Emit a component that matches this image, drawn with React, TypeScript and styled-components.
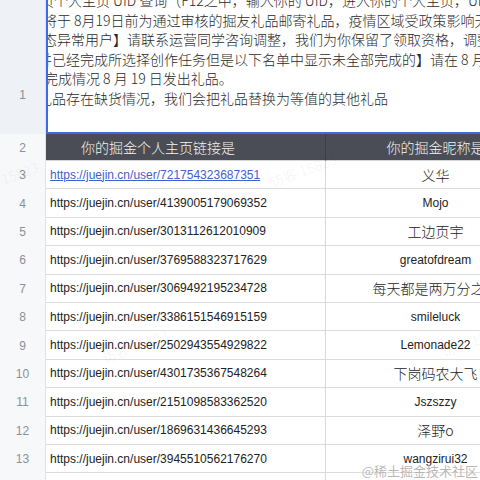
import React from "react";
import styled, { createGlobalStyle } from "styled-components";

const Global = createGlobalStyle`
  html, body { margin: 0; padding: 0; background: #fff; }
  body {
    width: 480px;
    height: 480px;
    overflow: hidden;
    font-family: "Noto Sans CJK SC", "Noto Sans", sans-serif;
  }
`;

const Sheet = styled.div`
  position: relative;
  width: 480px;
  height: 480px;
  overflow: hidden;
  background: #fff;
`;

const Row = styled.div<{ $h: number }>`
  display: flex;
  height: ${(p) => p.$h}px;
  flex: 0 0 auto;
`;

const RowHead = styled.div<{ $active?: boolean; $pad?: number }>`
  flex: 0 0 46px;
  border-right: 1px solid #dfe2e6;
  background: ${(p) => (p.$active ? "#eef1f6" : "#f7f8fa")};
  display: flex;
  justify-content: center;
  align-items: ${(p) => (p.$pad ? "flex-end" : "center")};
  padding-bottom: ${(p) => p.$pad ?? 0}px;
  box-sizing: border-box;
  font-family: "Liberation Sans", sans-serif;
  font-size: 12px;
  color: #8b9099;
`;

const Cells = styled.div`
  flex: 1;
  display: flex;
  overflow: hidden;
  min-width: 0;
`;

const NoteCell = styled.div`
  flex: 1;
  border-left: 2px solid #3d6be2;
  border-bottom: 2px solid #3d6be2;
  overflow: hidden;
  background: #fff;
`;

const Note = styled.div`
  margin-top: -9px;
  font-size: 14px;
  font-weight: 300;
  line-height: 19.6px;
  color: #2a2a2a;
  white-space: nowrap;
`;

const NoteLine = styled.div<{ $shift: number }>`
  margin-left: ${(p) => p.$shift}px;
`;

const HeadCell = styled.div<{ $w: number; $left?: boolean }>`
  flex: 0 0 ${(p) => p.$w}px;
  box-sizing: border-box;
  background: #4a4d55;
  color: #f4f4f4;
  font-size: 14px;
  font-weight: 300;
  display: flex;
  align-items: center;
  justify-content: ${(p) => (p.$left ? "flex-start" : "center")};
  padding-left: ${(p) => (p.$left ? 35 : 0)}px;
  border-right: 1px solid #3c3f45;
  border-bottom: 1px solid #d6d6d6;
  white-space: nowrap;
`;

const Cell = styled.div<{ $w: number; $center?: boolean }>`
  flex: 0 0 ${(p) => p.$w}px;
  box-sizing: border-box;
  border-right: 1px solid #d9d9d9;
  border-bottom: 1px solid #dcdcdc;
  display: flex;
  align-items: center;
  justify-content: ${(p) => (p.$center ? "center" : "flex-start")};
  padding-left: ${(p) => (p.$center ? 0 : 4)}px;
  white-space: nowrap;
  overflow: hidden;
  color: #222;
`;

const Url = styled.span<{ $link?: boolean }>`
  font-family: "Liberation Sans", sans-serif;
  font-size: 12px;
  color: ${(p) => (p.$link ? "#3f5fcc" : "#222")};
  text-decoration: ${(p) => (p.$link ? "underline" : "none")};
`;

const Nick = styled.span<{ $cjk?: boolean }>`
  font-family: ${(p) =>
    p.$cjk ? '"Noto Sans CJK SC", sans-serif' : '"Liberation Sans", sans-serif'};
  font-size: ${(p) => (p.$cjk ? 14 : 12)}px;
  font-weight: ${(p) => (p.$cjk ? 300 : 400)};
  color: #222;
`;

const Watermark = styled.span<{ $x: number; $y: number }>`
  position: absolute;
  left: ${(p) => p.$x}px;
  top: ${(p) => p.$y}px;
  transform: rotate(-20deg);
  font-size: 14px;
  color: rgba(0, 0, 0, 0.05);
  white-space: nowrap;
  pointer-events: none;
`;

const Brand = styled.span`
  position: absolute;
  right: 2px;
  bottom: 0;
  font-size: 13px;
  color: rgba(170, 170, 170, 0.85);
  text-shadow: 0 0 2px #fff;
  white-space: nowrap;
`;

const noteLines: { text: string; shift: number }[] = [
  { text: "页个人主页 UID 查询（F12之中，输入你的 UID，进入你的个人主页，UID 在", shift: -8 },
  { text: "将于 8月19日前为通过审核的掘友礼品邮寄礼品，疫情区域受政策影响无法", shift: -5 },
  { text: "态异常用户】请联系运营同学咨询调整，我们为你保留了领取资格，调整", shift: -5 },
  { text: "并已经完成所选择创作任务但是以下名单中显示未全部完成的】请在 8 月", shift: -10 },
  { text: "完成情况 8 月 19 日发出礼品。", shift: -4 },
  { text: "礼品存在缺货情况，我们会把礼品替换为等值的其他礼品", shift: -10 },
];

const rows: { id: string; nick: string; cjk?: boolean }[] = [
  { id: "721754323687351", nick: "义华", cjk: true },
  { id: "4139005179069352", nick: "Mojo" },
  { id: "3013112612010909", nick: "工边页宇", cjk: true },
  { id: "3769588323717629", nick: "greatofdream" },
  { id: "3069492195234728", nick: "每天都是两万分之一", cjk: true },
  { id: "3386151546915159", nick: "smileluck" },
  { id: "2502943554929822", nick: "Lemonade22" },
  { id: "4301735367548264", nick: "下岗码农大飞", cjk: true },
  { id: "2151098583362520", nick: "Jszszzy" },
  { id: "1869631436645293", nick: "泽野o", cjk: true },
  { id: "3945510562176270", nick: "wangzirui32" },
];

export default function App() {
  return (
    <>
      <Global />
      <Sheet>
        <Row $h={134}>
          <RowHead $active $pad={32}>1</RowHead>
          <Cells>
            <NoteCell>
              <Note>
                {noteLines.map((l, i) => (
                  <NoteLine key={i} $shift={l.shift}>
                    {l.text}
                  </NoteLine>
                ))}
              </Note>
            </NoteCell>
          </Cells>
        </Row>
        <Row $h={27}>
          <RowHead>2</RowHead>
          <Cells>
            <HeadCell $w={280} $left>
              你的掘金个人主页链接是
            </HeadCell>
            <HeadCell $w={220}>你的掘金昵称是</HeadCell>
          </Cells>
        </Row>
        {rows.map((r, i) => (
          <Row $h={28.4} key={r.id}>
            <RowHead>{i + 3}</RowHead>
            <Cells>
              <Cell $w={280}>
                <Url $link={i === 0}>https://juejin.cn/user/{r.id}</Url>
              </Cell>
              <Cell $w={220} $center>
                <Nick $cjk={r.cjk}>{r.nick}</Nick>
              </Cell>
            </Cells>
          </Row>
        ))}
        <Row $h={28.4}>
          <RowHead>14</RowHead>
          <Cells>
            <Cell $w={280} />
            <Cell $w={220} $center />
          </Cells>
        </Row>
        <Watermark $x={-30} $y={168}>访客 15823</Watermark>
        <Watermark $x={268} $y={160}>访客 15823</Watermark>
        <Watermark $x={100} $y={336}>访客 15823</Watermark>
        <Watermark $x={440} $y={330}>访客 15823</Watermark>
        <Brand>@稀土掘金技术社区</Brand>
      </Sheet>
    </>
  );
}
